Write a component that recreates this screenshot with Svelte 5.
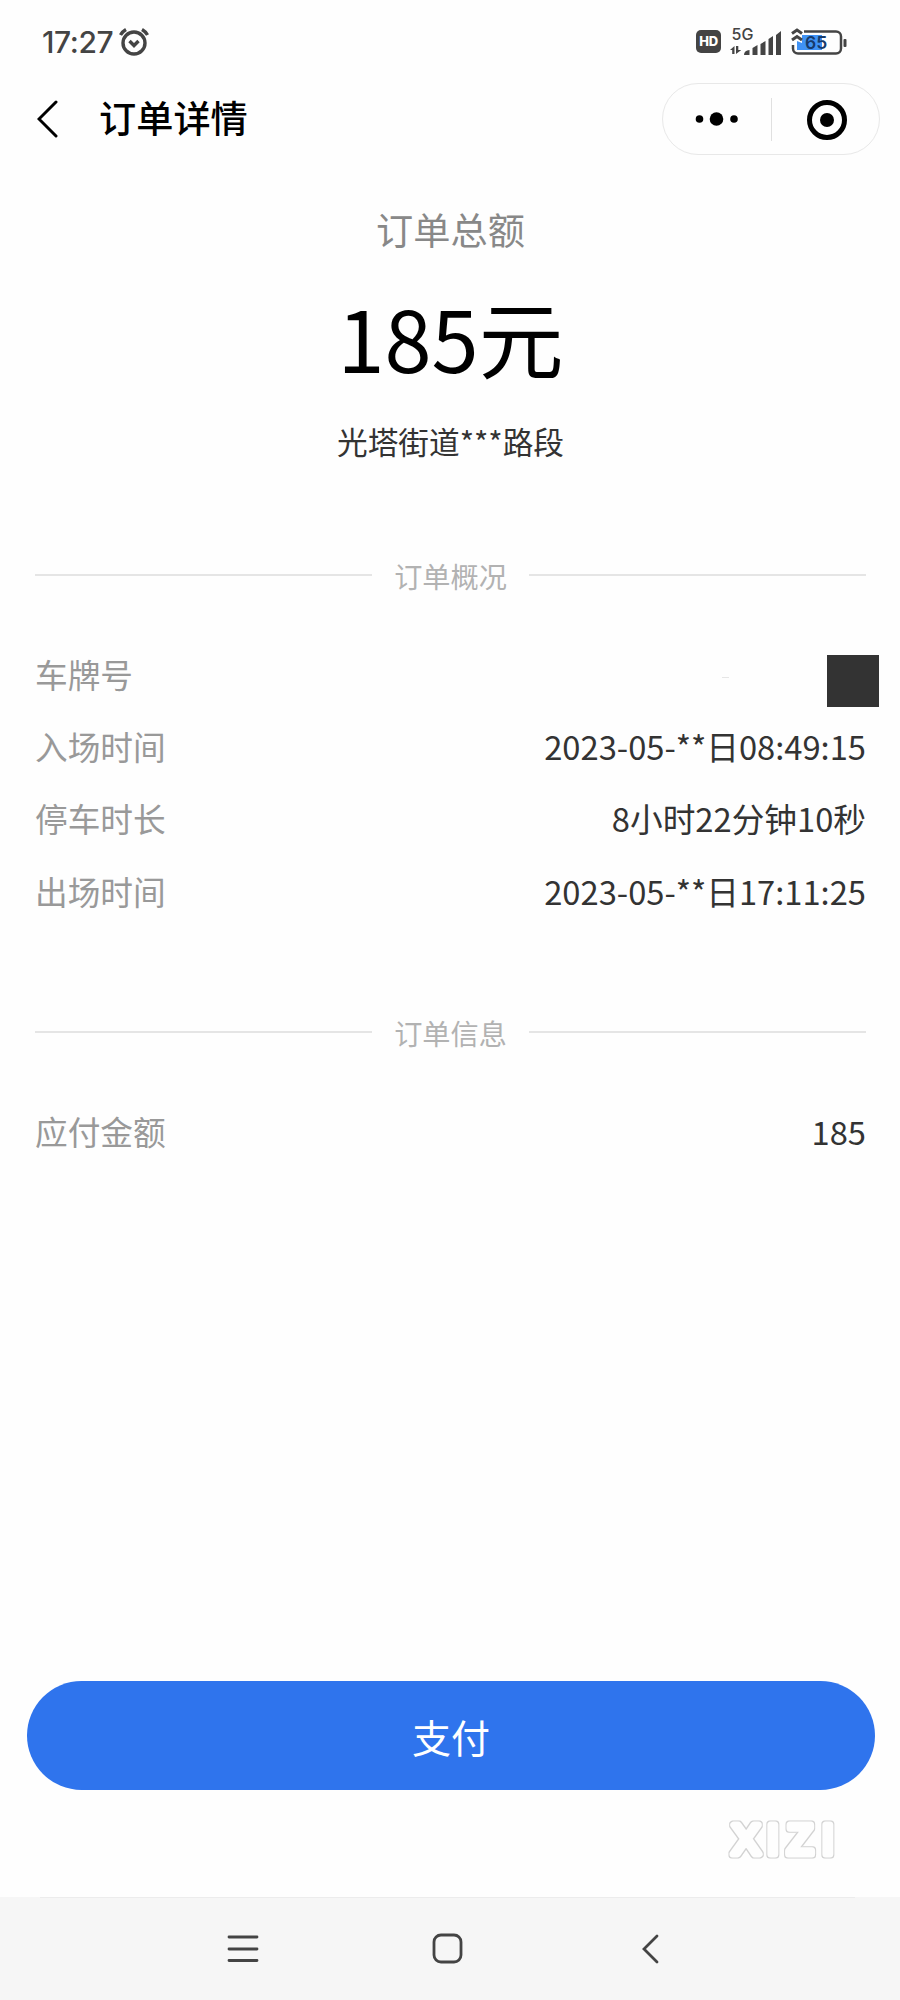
<script lang="ts">
  interface Row {
    label: string;
    value: string;
    masked?: boolean;
  }

  interface Section {
    title: string;
    rows: Row[];
  }

  let {
    total = '185元',
    place = '光塔街道***路段'
  }: {
    total?: string;
    place?: string;
  } = $props();

  const sections: Section[] = [
    {
      title: '订单概况',
      rows: [
        { label: '车牌号', value: '', masked: true },
        { label: '入场时间', value: '2023-05-**日08:49:15' },
        { label: '停车时长', value: '8小时22分钟10秒' },
        { label: '出场时间', value: '2023-05-**日17:11:25' }
      ]
    },
    {
      title: '订单信息',
      rows: [{ label: '应付金额', value: '185' }]
    }
  ];
</script>

<div class="page">
  <header class="status">
    <span class="time">17:27</span>
    <svg class="alarm" width="32" height="30" viewBox="0 0 32 30">
      <circle cx="16" cy="16" r="11" />
      <path d="M11.500 14l4.500 4.500 4.500-4.500M2.500 8Q4.500 4.500 8 2.500M29.500 8Q27.500 4.500 24 2.500" />
    </svg>
    <div class="indicators">
      <span class="hd">HD</span>
      <svg width="52" height="42" viewBox="0 -6 52 42">
        <text class="network" x="1.500" y="12.500">5G</text>
        <path class="solid" d="M0 23l4.500-4v8h-2.300V23zM6 19h2.300v4h3l-5.300 4zM14 28q0-4.500 5.500-5v5zM22.500 28v-7l5-3v10zM30.500 28V17l5-3v14zM38.500 28V12l4.500-3v19zM46 28V8l5-4v24z" />
      </svg>
      <svg width="56" height="30" viewBox="0 0 56 30">
        <path class="charge" d="M6 23V14l5 2V8h20v15z" />
        <path class="frame" d="M13 4.500h32a5 5 0 0 1 5 5v12a5 5 0 0 1-5 5H7a5 5 0 0 1-5-5V18" />
        <path class="frame chevrons" d="M1 6.500L6 3l5 3.500M1 13L6 9.500l5 3.500" />
        <rect class="solid" x="52.500" y="12" width="3" height="8" rx="1" />
        <text class="level" x="14" y="22">65</text>
      </svg>
    </div>
  </header>

  <nav class="titlebar">
    <svg class="back" width="22" height="38" viewBox="0 0 22 38">
      <path d="M19 2L2 19l17 17" />
    </svg>
    <h1>订单详情</h1>
    <div class="capsule">
      <svg class="more" width="44" height="16" viewBox="0 0 44 16">
        <circle cx="4.500" cy="8" r="3.800" />
        <circle cx="21.500" cy="8" r="6.800" />
        <circle cx="39" cy="8" r="3.800" />
      </svg>
      <span class="divider"></span>
      <svg class="close" width="42" height="42" viewBox="0 0 42 42">
        <circle class="ring" cx="21" cy="21" r="17.500" />
        <circle cx="21" cy="21" r="7" />
      </svg>
    </div>
  </nav>

  <main>
    <div class="summary">
      <div class="caption">订单总额</div>
      <div class="amount">{total}</div>
      <div class="place">{place}</div>
    </div>

    {#each sections as section}
      <section>
        <h2><span>{section.title}</span></h2>
        {#each section.rows as row}
          <div class="row">
            <span class="label">{row.label}</span>
            {#if row.masked}
              <span class="speck"></span>
              <span class="mask"></span>
            {:else}
              <span class="value">{row.value}</span>
            {/if}
          </div>
        {/each}
      </section>
    {/each}
  </main>

  <footer>
    <button type="button" class="pay">支付</button>
    <svg class="brand" width="120" height="50" viewBox="0 0 120 50">
      <!-- keeps only the rim around the fattened letters -->
      <filter id="rim" x="-10%" y="-20%" width="120%" height="140%" color-interpolation-filters="sRGB">
        <feMorphology in="SourceAlpha" operator="dilate" radius="1" result="grown" />
        <feFlood flood-color="#d2d2d2" />
        <feComposite in2="grown" operator="in" />
        <feComposite in2="SourceAlpha" operator="out" />
      </filter>
      <text x="5 40 60.200 95" y="39.500" filter="url(#rim)">XIZI</text>
    </svg>
  </footer>

  <div class="navbar">
    <svg width="32" height="32" viewBox="0 0 32 32"><path d="M2 4h28M2 16h28M2 27.500h28" /></svg>
    <svg width="32" height="32" viewBox="0 0 32 32"><rect x="2" y="2" width="27" height="27" rx="7" /></svg>
    <svg width="32" height="32" viewBox="0 0 32 32"><path d="M21 3L8 16l13 13" /></svg>
  </div>
</div>

<style>
  :global(body) {
    margin: 0;
    background: #fefefe;
  }

  .page {
    width: 900px;
    height: 2000px;
    display: flex;
    flex-direction: column;
    background: #fefefe;
    color: #333;
    font-family: 'Noto Sans CJK SC', sans-serif;
  }

  svg {
    display: block;
    flex-shrink: 0;
  }

  .status {
    height: 83px;
    box-sizing: border-box;
    padding: 0 53px 0 42px;
    display: flex;
    align-items: center;
    color: #444;
  }

  .time {
    width: 76px;
    font-family: Inter, sans-serif;
    font-size: 30px;
    font-weight: 500;
    letter-spacing: -0.4px;
    line-height: 36px;
  }

  .alarm {
    fill: none;
    stroke: #444;
    stroke-width: 3.4;
  }

  .indicators {
    margin-left: auto;
    display: flex;
    align-items: center;
    gap: 9px;
  }

  .hd {
    width: 25px;
    height: 23px;
    border-radius: 5px;
    background: #444;
    color: #fff;
    font: 800 13px/23px Inter, sans-serif;
    letter-spacing: -0.3px;
    text-align: center;
  }

  .solid {
    fill: #444;
  }

  .network {
    font: 500 16px Inter, sans-serif;
    fill: #444;
  }

  .charge {
    fill: #3f92f5;
  }

  .frame {
    fill: none;
    stroke: #444;
    stroke-width: 2.5;
  }

  .chevrons {
    stroke-width: 3;
  }

  .level {
    font: 600 17.5px Inter, sans-serif;
    fill: #173b6b;
  }

  .titlebar {
    height: 72px;
    box-sizing: border-box;
    padding: 0 20px 0 37px;
    display: flex;
    align-items: center;
  }

  .back {
    fill: none;
    stroke: #000;
    stroke-width: 3;
    stroke-linecap: round;
  }

  h1 {
    margin: 0 0 4px 40px;
    color: #000;
    font-size: 37.2px;
    font-weight: 500;
    line-height: 56px;
  }

  .capsule {
    width: 218px;
    height: 72px;
    box-sizing: border-box;
    margin-left: auto;
    border: 1px solid #e8e8e8;
    border-radius: 36px;
    display: grid;
    grid-template-columns: 1fr 1px 1fr;
    align-items: center;
    justify-items: center;
  }

  .divider {
    width: 1px;
    height: 43px;
    background: #e0e0e0;
  }

  .close {
    margin: 2px 0 0 4px;
  }

  .ring {
    fill: none;
    stroke: #000;
    stroke-width: 5;
  }

  main {
    flex: 1;
    padding: 0 34px 0 35px;
  }

  .summary {
    padding: 46px 0 6px;
    text-align: center;
  }

  .caption {
    color: #888;
    font-size: 37.2px;
    line-height: 56px;
  }

  .amount {
    margin-top: 19px;
    color: #000;
    font-size: 84.8px;
    line-height: 120px;
  }

  .place {
    margin-top: 22px;
    font-size: 30.7px;
    line-height: 46px;
  }

  h2 {
    margin: 84.5px 0 41px;
    display: flex;
    gap: 22px;
    color: #b2b2b2;
    font-size: 28.2px;
    font-weight: 400;
    line-height: 42px;
  }

  h2::before,
  h2::after {
    content: '';
    flex: 1;
    height: 2px;
    margin-top: 19px;
    background: #e5e5e5;
  }

  .row {
    height: 72.4px;
    display: flex;
    align-items: center;
    font-size: 32.7px;
    line-height: 48px;
  }

  .label {
    color: #999;
  }

  .value {
    margin-left: auto;
  }

  .speck {
    width: 7px;
    height: 1px;
    margin: 8px 98px 0 auto;
    background: #e6e6e6;
  }

  .mask {
    width: 52px;
    height: 52px;
    margin: 14px -13px 0 0;
    background: #333;
  }

  footer {
    height: 216px;
    padding: 0 25px 0 27px;
    display: flex;
    flex-direction: column;
  }

  .pay {
    height: 109px;
    flex-shrink: 0;
    padding: 0;
    border: none;
    border-radius: 55px;
    background: #2f74ed;
    color: #fff;
    font-family: inherit;
    font-size: 39px;
    line-height: 58px;
  }

  .brand {
    margin: 24px 28px 0 auto;
  }

  .brand text {
    font: 42px 'Liberation Sans', sans-serif;
    fill: #fefefe;
    stroke: #fefefe;
    stroke-width: 7px;
    stroke-linejoin: round;
  }

  .navbar {
    height: 103px;
    box-sizing: border-box;
    padding: 0 232px 0 227px;
    display: flex;
    align-items: center;
    justify-content: space-between;
    background: linear-gradient(#ececec, #ececec) 40px 0 / 815px 1px no-repeat #f6f6f6;
  }

  .navbar svg {
    fill: none;
    stroke: #444;
    stroke-width: 2.8;
    stroke-linecap: round;
  }
</style>
